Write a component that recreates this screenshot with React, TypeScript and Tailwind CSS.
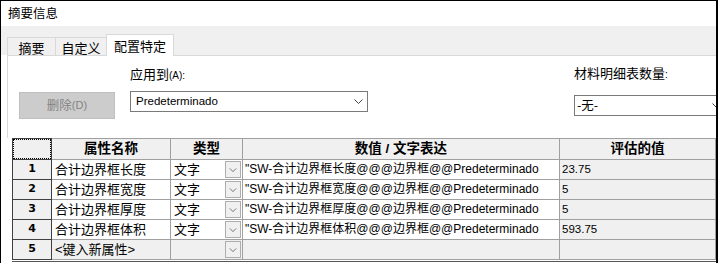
import React from 'react';

const rows = [
  { n: '1', name: '合计边界框长度', val: '"SW-合计边界框长度@@@边界框@@Predeterminado', ev: '23.75' },
  { n: '2', name: '合计边界框宽度', val: '"SW-合计边界框宽度@@@边界框@@Predeterminado', ev: '5' },
  { n: '3', name: '合计边界框厚度', val: '"SW-合计边界框厚度@@@边界框@@Predeterminado', ev: '5' },
  { n: '4', name: '合计边界框体积', val: '"SW-合计边界框体积@@@边界框@@Predeterminado', ev: '593.75' },
];

const Chevron: React.FC<{ className?: string }> = ({ className }) => (
  <svg viewBox="0 0 9 5" className={className} fill="none" stroke="currentColor" strokeWidth="1">
    <polyline points="0.5,0.5 4.5,4.5 8.5,0.5" />
  </svg>
);

const TypeButton: React.FC = () => (
  <div className="ml-auto mr-px flex h-[17px] w-[16px] shrink-0 items-center justify-center border border-[#adadad] bg-[#f0f0f0] text-[#555]">
    <Chevron className="h-[4px] w-[8px]" />
  </div>
);

export default function App() {
  const cell = 'border-r border-b border-[#a0a0a0] h-[20px] flex items-center leading-[19px] overflow-hidden whitespace-nowrap';
  const rowHead = 'border-l border-r border-b border-[#404040] bg-[#f0f0f0] h-[20px] flex items-center justify-center text-[11px] font-bold font-["DejaVu_Sans",sans-serif]';

  return (
    <div className="h-[263px] w-[718px] overflow-hidden border-l border-t border-r-2 border-black bg-white font-['Liberation_Sans','Noto_Sans_CJK_SC',sans-serif] text-black">
      {/* title */}
      <div className="flex h-[25px] items-center pl-[7px] text-[12.5px] font-['Noto_Sans_CJK_SC',sans-serif]">摘要信息</div>

      {/* tab strip */}
      <div className="flex h-[29px] items-end bg-[#f0f0f0] pl-[6px] text-[13px] font-['Noto_Sans_CJK_SC',sans-serif]">
        <div className="flex h-[18px] w-[49px] items-center justify-center border border-b-0 border-[#d9d9d9] pt-px leading-none">摘要</div>
        <div className="-ml-px flex h-[18px] w-[52px] items-center justify-center border border-b-0 border-[#d9d9d9] pt-px leading-none">自定义</div>
        <div className="relative z-10 -mb-px -ml-px flex h-[22px] w-[68px] items-center justify-center border border-b-0 border-[#d9d9d9] bg-white pb-[1px] leading-none">配置特定</div>
      </div>

      {/* panel */}
      <div className="ml-[6px] border-t border-[#d9d9d9]">
        <div className="flex h-[82px] border-l border-[#d9d9d9]">
          <div className="ml-[11px] mt-[36px] flex h-[27px] w-[96px] shrink-0 items-center justify-center border border-[#bfbfbf] bg-[#cccccc] text-[12px] text-[#838383]">
            <span className="text-[12.5px] font-['Noto_Sans_CJK_SC',sans-serif]">删除</span>
            <span className="text-[11px]">(D)</span>
          </div>

          <div className="ml-[15px] w-[238px] shrink-0 pt-[10px]">
            <div className="h-[16px] leading-[16px]">
              <span className="text-[13px] font-['Noto_Sans_CJK_SC',sans-serif]">应用到</span>
              <span className="text-[10px]">(A):</span>
            </div>
            <div className="mt-[9px] flex h-[21px] items-center justify-between border border-[#7a7a7a] pl-[5px] pr-[4px] text-[11.5px]">
              <span>Predeterminado</span>
              <Chevron className="h-[5px] w-[9px] text-[#444]" />
            </div>
          </div>

          <div className="ml-[206px] w-[150px] shrink-0 pt-[9px]">
            <div className="h-[16px] leading-[16px]">
              <span className="text-[13px] font-['Noto_Sans_CJK_SC',sans-serif]">材料明细表数量</span>
              <span className="text-[10px]">:</span>
            </div>
            <div className="mt-[14px] flex h-[21px] items-center justify-between border border-[#7a7a7a] pl-[2px] pr-[2px] text-[12.5px]">
              <span className="font-['Noto_Sans_CJK_SC',sans-serif]">-无-</span>
              <Chevron className="h-[5px] w-[9px] text-[#444]" />
            </div>
          </div>
        </div>

        {/* table */}
        <div className="pl-[5px]">
          <div className="grid grid-cols-[40px_119px_72px_317px_156px]">
            <div className="relative h-[22px] border-l border-t border-r border-b border-[#404040] bg-[#f0f0f0]">
              <div className="absolute inset-0 border border-dotted border-black" />
            </div>
            {['属性名称', '类型', '数值 / 文字表达', '评估的值'].map((h) => (
              <div key={h} className="flex h-[22px] items-center justify-center border-r border-t border-b border-[#a0a0a0] bg-[#f0f0f0] text-[13.5px] font-bold">
                {h}
              </div>
            ))}

            {rows.map((r) => (
              <React.Fragment key={r.n}>
                <div className={rowHead}>{r.n}</div>
                <div className={`${cell} pl-[3px] text-[13px]`}>{r.name}</div>
                <div className={`${cell} pl-[3px] text-[13px]`}>
                  <span>文字</span>
                  <TypeButton />
                </div>
                <div className={`${cell} pl-[2px] text-[12px]`}>{r.val}</div>
                <div className={`${cell} bg-[#f0f0f0] pl-[2px] text-[11.5px]`}>{r.ev}</div>
              </React.Fragment>
            ))}

            <div className={rowHead}>5</div>
            <div className={`${cell} bg-[#f0f0f0] pl-[3px] text-[13px]`}>&lt;键入新属性&gt;</div>
            <div className={`${cell} bg-[#f0f0f0]`}>
              <TypeButton />
            </div>
            <div className={`${cell} bg-[#f0f0f0]`} />
            <div className={`${cell} bg-[#f0f0f0]`} />
          </div>
          <div className="mt-[1px] h-px w-[704px] bg-[#555]" />
        </div>
      </div>
    </div>
  );
}
